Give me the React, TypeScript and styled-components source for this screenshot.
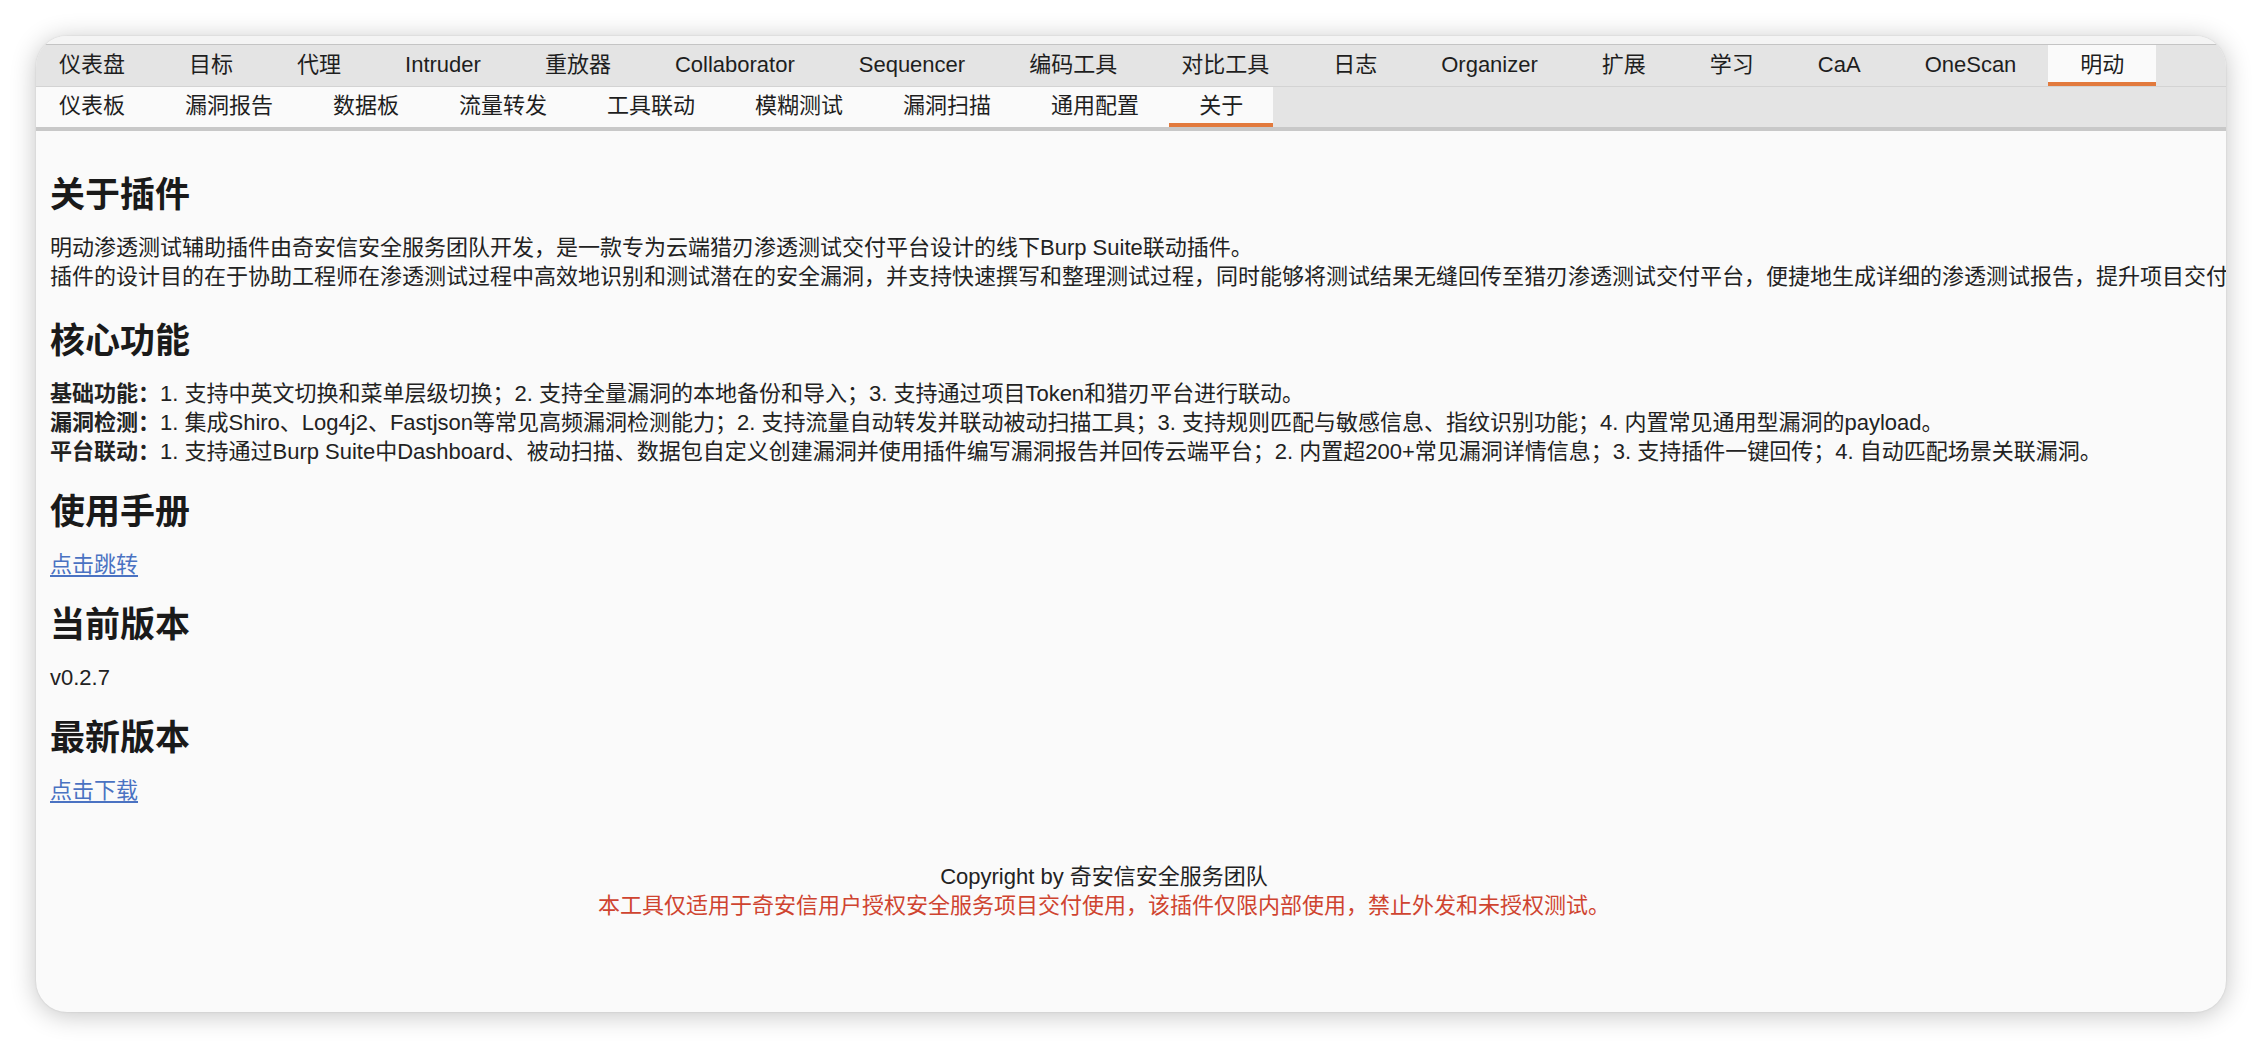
import React from "react";
import styled, { createGlobalStyle } from "styled-components";

const FONT = `"Liberation Sans", Arial, "Noto Sans CJK SC", sans-serif`;

const Global = createGlobalStyle`
  html, body {
    margin: 0;
    padding: 0;
    background: #ffffff;
  }
  body {
    font-family: ${FONT};
    color: #222222;
  }
`;

const Page = styled.div`
  width: 2262px;
  height: 1048px;
  padding: 36px;
  box-sizing: border-box;
  background: #ffffff;
`;

const Window = styled.div`
  height: 976px;
  border-radius: 31px;
  overflow: hidden;
  background: #fafafa;
  box-shadow: 0 3px 26px rgba(0, 0, 0, 0.24), 0 0 2px rgba(0, 0, 0, 0.12);
  display: flex;
  flex-direction: column;
`;

const TitleStrip = styled.div`
  height: 8px;
  flex: none;
  background: #f4f4f4;
  border-bottom: 1px solid #c4c4c4;
`;

const TabRow = styled.div<{ $divider: string }>`
  display: flex;
  flex: none;
  height: ${(p) => (p.$divider === "thick" ? "40px" : "41px")};
  background: #e4e4e4;
  border-bottom: ${(p) =>
    p.$divider === "thick" ? "4px solid #c8c8c8" : "1px solid #d3d3d3"};
  box-sizing: content-box;
`;

const Tab = styled.div<{ $pad: number; $active?: boolean; $light?: boolean }>`
  display: flex;
  align-items: center;
  box-sizing: border-box;
  height: 100%;
  padding: 2px ${(p) => p.$pad}px 0;
  font-size: 22px;
  line-height: 26px;
  white-space: nowrap;
  color: #1e1e1e;
  background: ${(p) => (p.$active || p.$light ? "#fafafa" : "transparent")};
  border-bottom: 4px solid ${(p) => (p.$active ? "#e27a3d" : "transparent")};

  &:first-child {
    padding-left: 23px;
  }
`;

const Content = styled.div`
  flex: 1;
  padding: 18px 0 0 14px;
  overflow: hidden;
  display: flex;
  flex-direction: column;
`;

const Heading = styled.h2`
  margin: 25px 0 17px;
  font-size: 35px;
  line-height: 42px;
  font-weight: 700;
  color: #1a1a1a;
  white-space: nowrap;
`;

const Body = styled.div<{ $after?: number }>`
  font-size: 22px;
  line-height: 29px;
  color: #222222;
  white-space: nowrap;
  margin-bottom: ${(p) => p.$after ?? 0}px;
`;

const Line = styled.div`
  white-space: nowrap;
`;

const Label = styled.b`
  font-weight: 700;
`;

const Link = styled.a`
  color: #4a72c2;
  text-decoration: underline;
  text-underline-offset: 3px;
  cursor: pointer;
`;

const Footer = styled.div`
  margin-top: 57px;
  padding-right: 68px;
  text-align: center;
  font-size: 22px;
  line-height: 29px;
`;

const Warning = styled.div`
  color: #cf4430;
`;

const primaryTabs = [
  "仪表盘",
  "目标",
  "代理",
  "Intruder",
  "重放器",
  "Collaborator",
  "Sequencer",
  "编码工具",
  "对比工具",
  "日志",
  "Organizer",
  "扩展",
  "学习",
  "CaA",
  "OneScan",
  "明动",
];

const secondaryTabs = [
  "仪表板",
  "漏洞报告",
  "数据板",
  "流量转发",
  "工具联动",
  "模糊测试",
  "漏洞扫描",
  "通用配置",
  "关于",
];

export default function App() {
  return (
    <>
      <Global />
      <Page>
        <Window>
          <TitleStrip />
          <TabRow $divider="thin">
            {primaryTabs.map((t) => (
              <Tab key={t} $pad={32} $active={t === "明动"}>
                {t}
              </Tab>
            ))}
          </TabRow>
          <TabRow $divider="thick">
            {secondaryTabs.map((t) => (
              <Tab key={t} $pad={30} $light $active={t === "关于"}>
                {t}
              </Tab>
            ))}
          </TabRow>
          <Content>
            <Heading>关于插件</Heading>
            <Body $after={4}>
              <Line>
                明动渗透测试辅助插件由奇安信安全服务团队开发，是一款专为云端猎刃渗透测试交付平台设计的线下Burp
                Suite联动插件。
              </Line>
              <Line>
                插件的设计目的在于协助工程师在渗透测试过程中高效地识别和测试潜在的安全漏洞，并支持快速撰写和整理测试过程，同时能够将测试结果无缝回传至猎刃渗透测试交付平台，便捷地生成详细的渗透测试报告，提升项目交付效率。
              </Line>
            </Body>

            <Heading>核心功能</Heading>
            <Body>
              <Line>
                <Label>基础功能：</Label>1.
                支持中英文切换和菜单层级切换；2. 支持全量漏洞的本地备份和导入；3.
                支持通过项目Token和猎刃平台进行联动。
              </Line>
              <Line>
                <Label>漏洞检测：</Label>1.
                集成Shiro、Log4j2、Fastjson等常见高频漏洞检测能力；2.
                支持流量自动转发并联动被动扫描工具；3.
                支持规则匹配与敏感信息、指纹识别功能；4. 内置常见通用型漏洞的payload。
              </Line>
              <Line>
                <Label>平台联动：</Label>1. 支持通过Burp
                Suite中Dashboard、被动扫描、数据包自定义创建漏洞并使用插件编写漏洞报告并回传云端平台；2.
                内置超200+常见漏洞详情信息；3. 支持插件一键回传；4.
                自动匹配场景关联漏洞。
              </Line>
            </Body>

            <Heading>使用手册</Heading>
            <Body>
              <Link>点击跳转</Link>
            </Body>

            <Heading>当前版本</Heading>
            <Body>v0.2.7</Body>

            <Heading>最新版本</Heading>
            <Body>
              <Link>点击下载</Link>
            </Body>

            <Footer>
              <div>Copyright by 奇安信安全服务团队</div>
              <Warning>
                本工具仅适用于奇安信用户授权安全服务项目交付使用，该插件仅限内部使用，禁止外发和未授权测试。
              </Warning>
            </Footer>
          </Content>
        </Window>
      </Page>
    </>
  );
}
